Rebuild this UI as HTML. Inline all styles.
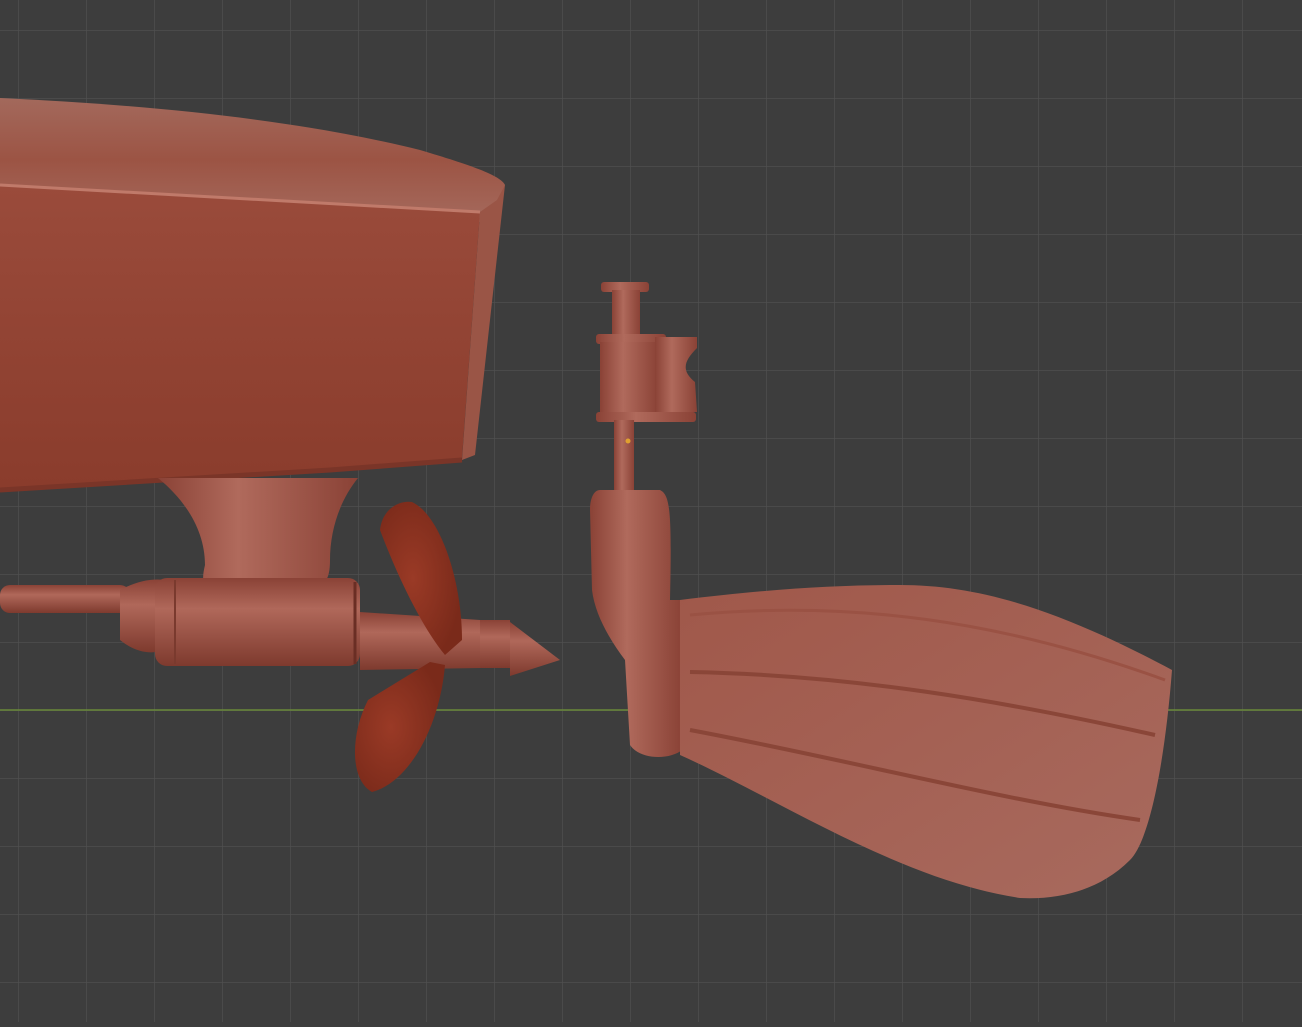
<!DOCTYPE html>
<html><head><style>html,body{margin:0;padding:0;background:#3d3d3d;overflow:hidden}</style></head><body>
<svg width="1302" height="1022" viewBox="0 0 1302 1022" xmlns="http://www.w3.org/2000/svg">
<defs>
<pattern id="g" x="18" y="30" width="68" height="68" patternUnits="userSpaceOnUse">
<path d="M0 0H68M0 0V68" stroke="#4f4f4f" stroke-width="1.5" fill="none"/>
</pattern>
<linearGradient id="side" x1="0" y1="0" x2="0" y2="1">
<stop offset="0" stop-color="#9a4b3b"/><stop offset="1" stop-color="#8a3c2c"/></linearGradient>
<linearGradient id="top" x1="0" y1="0" x2="0" y2="1">
<stop offset="0" stop-color="#a3695c"/><stop offset="0.5" stop-color="#9c5444"/><stop offset="1" stop-color="#a56a5d"/></linearGradient>
<linearGradient id="tube" x1="0" y1="0" x2="0" y2="1">
<stop offset="0" stop-color="#8a4236"/><stop offset="0.35" stop-color="#b0685a"/><stop offset="1" stop-color="#7e3a2e"/></linearGradient>
<linearGradient id="vtube" x1="0" y1="0" x2="1" y2="0">
<stop offset="0" stop-color="#8a4236"/><stop offset="0.4" stop-color="#b06a5c"/><stop offset="1" stop-color="#8a4236"/></linearGradient>
<linearGradient id="blade" x1="0" y1="0" x2="1" y2="1">
<stop offset="0" stop-color="#a0584a"/><stop offset="1" stop-color="#a86a5e"/></linearGradient>
<radialGradient id="prop" cx="0.4" cy="0.5" r="0.6">
<stop offset="0" stop-color="#9a3a26"/><stop offset="1" stop-color="#7a2a1a"/></radialGradient>
</defs>
<rect width="1302" height="1022" fill="#3d3d3d"/>
<rect width="1302" height="1022" fill="url(#g)"/>
<line x1="0" y1="710" x2="1302" y2="710" stroke="#6a8a3a" stroke-width="1.5"/>

<path d="M0 98 C150 105 300 120 420 150 C470 165 500 175 505 185 L495 215 L480 222 L0 188 Z" fill="url(#top)"/>
<path d="M0 185 L480 212 L462 458 L330 470 L0 492 Z" fill="url(#side)"/>
<path d="M480 212 L497 200 L505 185 L475 455 L462 460 Z" fill="#9a5546"/>
<path d="M0 185 L480 212" stroke="#c07a6a" stroke-width="3" fill="none"/>
<path d="M0 490 L330 470 L462 460" stroke="#7a3528" stroke-width="5" fill="none"/>

<!-- skeg -->
<path d="M158 478 L358 478 C340 500 330 530 330 560 C330 580 325 590 300 592 L220 592 C205 590 200 585 205 565 C205 530 185 500 158 478 Z" fill="url(#vtube)"/>
<rect x="0" y="585" width="130" height="28" rx="10" fill="url(#tube)"/>
<path d="M120 590 C135 582 150 578 165 580 L165 650 C150 655 135 652 120 640 Z" fill="url(#tube)"/>
<rect x="155" y="578" width="205" height="88" rx="12" fill="url(#tube)"/>
<line x1="175" y1="580" x2="175" y2="664" stroke="#7a3a2e" stroke-width="2"/>
<line x1="355" y1="582" x2="355" y2="664" stroke="#6a2e24" stroke-width="3"/>
<path d="M360 612 L480 620 L480 668 L360 670 Z" fill="url(#tube)"/>
<rect x="480" y="620" width="30" height="48" fill="url(#tube)"/>
<path d="M510 622 L560 660 L510 676 Z" fill="url(#tube)"/>
<!-- propeller -->
<path d="M412 502 C440 515 462 580 462 640 L445 655 C420 625 395 570 380 530 C382 510 398 500 412 502 Z" fill="url(#prop)"/>
<path d="M445 665 C440 725 410 782 372 792 C350 780 350 735 368 700 L430 662 Z" fill="url(#prop)"/>

<rect x="601" y="282" width="48" height="10" rx="3" fill="url(#vtube)"/>
<rect x="612" y="290" width="28" height="46" fill="url(#vtube)"/>
<rect x="596" y="334" width="70" height="10" rx="3" fill="url(#vtube)"/>
<rect x="600" y="342" width="58" height="70" fill="url(#vtube)"/>
<path d="M655 337 L697 337 L697 348 C685 360 680 370 695 382 L697 412 L655 412 Z" fill="url(#vtube)"/>
<rect x="596" y="412" width="100" height="10" rx="3" fill="url(#vtube)"/>
<rect x="614" y="420" width="20" height="72" fill="url(#vtube)"/>
<circle cx="628" cy="441" r="2.5" fill="#e0a030"/>
<path d="M600 490 L660 490 C670 495 672 510 670 600 L680 600 L682 750 C670 760 640 760 630 745 L625 660 C610 640 595 615 592 590 L590 510 C590 498 594 490 600 490 Z" fill="url(#vtube)"/>
<path d="M680 600 C760 590 830 585 900 585 C980 585 1060 610 1172 670 C1165 760 1150 840 1130 860 C1100 890 1060 900 1020 898 C900 880 780 800 680 755 Z" fill="url(#blade)"/>
<path d="M690 672 C850 675 1000 700 1155 735" stroke="#8a4638" stroke-width="4" fill="none"/>
<path d="M690 730 C850 760 1000 800 1140 820" stroke="#8a4638" stroke-width="4" fill="none"/>
<path d="M690 615 C850 600 1000 620 1165 680" stroke="#9a5244" stroke-width="3" fill="none"/>
</svg>
</body></html>
